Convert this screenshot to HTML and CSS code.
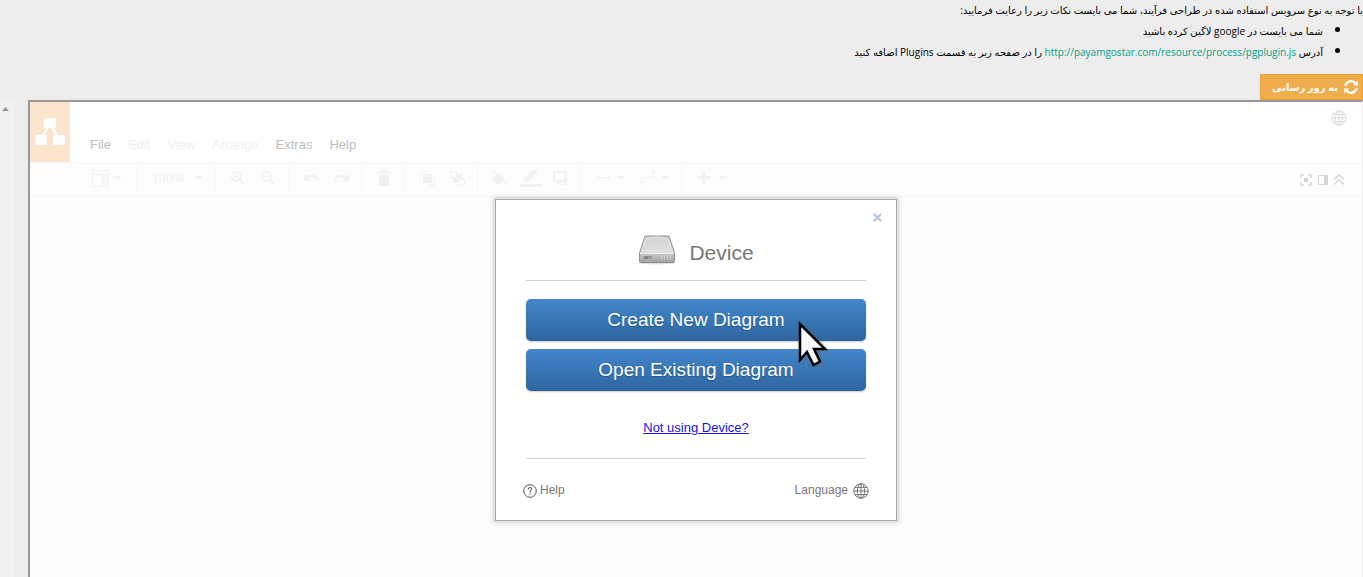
FILE: index.html
```html
<!DOCTYPE html>
<html lang="fa">
<head>
<meta charset="utf-8">
<title>Diagram</title>
<link rel="stylesheet" href="styles.css">
</head>
<body>
<svg class="defs" aria-hidden="true">
  <symbol id="globe" viewBox="0 0 16 16"><g fill="none" stroke="currentColor" stroke-width="1"><circle cx="8" cy="8" r="7.2"/><ellipse cx="8" cy="8" rx="3.6" ry="7.2"/><path d="M8 .8v14.4M.8 8h14.4M2 4.4h12M2 11.6h12"/></g></symbol>
  <symbol id="caret" viewBox="0 0 8 4"><path d="M0 0h8L4 4z" fill="currentColor"/></symbol>
</svg>
<header class="notes" dir="rtl">
  <p class="intro">با توجه به نوع سرویس استفاده شده در طراحی فرآیند، شما می بایست نکات زیر را رعایت فرمایید:</p>
  <ul class="steps">
    <li>شما می بایست در google لاگین کرده باشید</li>
    <li>آدرس <a href="http://payamgostar.com/resource/process/pgplugin.js">http://payamgostar.com/resource/process/pgplugin.js</a> را در صفحه زیر به قسمت Plugins اضافه کنید</li>
  </ul>
  <button class="update" type="button">
    <svg width="14" height="14" viewBox="0 0 14 14"><g fill="none" stroke="#fff" stroke-width="2.2"><path d="M1.3 6A5.7 5.7 0 0 1 11.4 3.4"/><path d="M12.7 8A5.7 5.7 0 0 1 2.6 10.6"/></g><path d="M13.8.6v5H8.8zM.2 13.4v-5h5z" fill="#fff"/></svg>
    <span>به روز رسانی</span>
  </button>
</header>
<main class="workspace">
  <div class="gutter"><svg width="7" height="4" viewBox="0 0 7 4"><path d="M0 4L3.5 0 7 4z" fill="#999"/></svg></div>
  <section class="editor">
    <div class="topbar">
      <div class="logo"><svg width="30" height="28" viewBox="0 0 30 28"><path d="M14 8L6 20M16 8l8 12" stroke="#fff" stroke-width="2"/><g fill="#fff"><rect x="9" y="0" width="12" height="10" rx="2"/><rect x="0" y="17" width="12" height="10" rx="2"/><rect x="18" y="17" width="12" height="10" rx="2"/></g></svg></div>
      <nav class="menu">
        <button type="button">File</button><button type="button" disabled>Edit</button><button type="button" disabled>View</button><button type="button" disabled>Arrange</button><button type="button">Extras</button><button type="button">Help</button>
      </nav>
      <button class="lang-corner" type="button" aria-label="Language"><svg width="16" height="16"><use href="#globe"/></svg></button>
    </div>
    <div class="toolbar">
      <div class="group first">
        <button class="drop" type="button" aria-label="View"><svg width="17" height="17" viewBox="0 0 17 17"><path d="M11 5h5v11h-5z" fill="#f8f8f8"/><path d="M.5.5h16v16H.5zM0 4.5h17M10.5 4v12" fill="none" stroke="currentColor"/></svg><svg width="8" height="4"><use href="#caret"/></svg></button>
      </div>
      <div class="group zoom"><button class="drop percent" type="button">100%<svg width="8" height="4"><use href="#caret"/></svg></button></div>
      <div class="group">
        <button type="button" aria-label="Zoom in"><svg width="14" height="14" viewBox="0 0 14 14"><path d="M9 9l4.3 4.3" stroke="currentColor" stroke-width="2.4"/><path d="M5.5 3v5M3 5.5h5" stroke="currentColor"/><circle cx="5.5" cy="5.5" r="4.6" fill="none" stroke="currentColor" stroke-width="1.8"/></svg></button>
        <button type="button" aria-label="Zoom out"><svg width="14" height="14" viewBox="0 0 14 14"><path d="M9 9l4.3 4.3" stroke="currentColor" stroke-width="2.4"/><path d="M3 5.5h5" stroke="currentColor"/><circle cx="5.5" cy="5.5" r="4.6" fill="none" stroke="currentColor" stroke-width="1.8"/></svg></button>
      </div>
      <div class="group">
        <button type="button" aria-label="Undo"><svg width="15" height="8" viewBox="0 0 15 8"><path d="M0 0v7h7L4.500 4.500C8 2 12 3 14 7h1C14 0 7-1 2.500 2.500z" fill="currentColor"/></svg></button>
        <button type="button" aria-label="Redo"><svg width="15" height="8" viewBox="0 0 15 8"><path d="M15 0v7H8l2.500-2.500C7 2 3 3 1 7H0C1 0 8-1 12.500 2.500z" fill="currentColor"/></svg></button>
      </div>
      <div class="group">
        <button type="button" aria-label="Delete"><svg width="14" height="16" viewBox="0 0 14 16"><path d="M0 1.500h4V0h6v1.500h4v2H0zM2 5h10v11H2z" fill="currentColor"/></svg></button>
      </div>
      <div class="group">
        <button type="button" aria-label="To front"><svg width="15" height="15" viewBox="0 0 15 15"><path d="M3 3h9v9H3z" fill="currentColor"/><path d="M7 .5H.5V7M14.500 8v6.500H8" fill="none" stroke="currentColor"/></svg></button>
        <button type="button" aria-label="To back"><svg width="15" height="15" viewBox="0 0 15 15"><path d="M7 3h5v5H7zM3 7h5v5H3z" fill="currentColor"/><path d="M.5.500h6v6h-6zM8.500 8.500h6v6h-6z" fill="#fdfdfd" stroke="currentColor"/></svg></button>
      </div>
      <div class="group">
        <button type="button" aria-label="Fill colour"><svg width="17" height="15" viewBox="0 0 17 15"><path d="M7 2l6 6-6.500 6L0 8z" fill="currentColor"/><path d="M1 0l7 7" stroke="currentColor" stroke-width="1.400"/><path d="M14.500 9c4 5 0 5 0 5s-4 0 0-5z" fill="currentColor" opacity=".7"/></svg></button>
        <button type="button" aria-label="Line colour"><svg width="21" height="18" viewBox="0 0 21 18"><path d="M4 13V9.500L13 1q2-2 3.500 0T16 4.500L7.500 13zM0 15h21v3H0z" fill="currentColor"/></svg></button>
        <button type="button" aria-label="Shadow"><svg width="15" height="14" viewBox="0 0 15 14"><path d="M3 11h10V3h2v11H3z" fill="currentColor" opacity=".6"/><path d="M1 1h11v9H1z" fill="none" stroke="currentColor" stroke-width="2"/></svg></button>
      </div>
      <div class="group">
        <button class="drop" type="button" aria-label="Arrow"><svg width="16" height="16" viewBox="0 0 16 16"><path d="M0 7.500h13" stroke="currentColor"/><path d="M12 5l3 2.500-3 2.500z" fill="currentColor"/></svg><svg width="8" height="4"><use href="#caret"/></svg></button>
        <button class="drop" type="button" aria-label="Waypoints"><svg width="16" height="16" viewBox="0 0 16 16"><path d="M.500 12.500h2v2h-2zM12.500.500h2v2h-2zM1.500 12V7.500h12V3" fill="none" stroke="currentColor"/></svg><svg width="8" height="4"><use href="#caret"/></svg></button>
      </div>
      <div class="group last">
        <button class="drop" type="button" aria-label="Insert"><svg width="16" height="14" viewBox="0 0 16 14"><path d="M6.500 0v13M0 6.500h13" stroke="currentColor" stroke-width="3"/></svg><svg width="8" height="4"><use href="#caret"/></svg></button>
      </div>
      <div class="panel-tools">
        <button type="button" aria-label="Fullscreen"><svg width="12" height="12" viewBox="0 0 12 12"><path d="M4 4h4v4H4z" fill="currentColor"/><path d="M1 4V1h3M8 1h3v3M11 8v3H8M4 11H1V8" fill="none" stroke="currentColor" stroke-width="1.500"/></svg></button>
        <button type="button" aria-label="Format panel"><svg width="10" height="10" viewBox="0 0 10 10"><path d="M.500.500h9v9h-9z" fill="none" stroke="currentColor"/><path d="M6 1h3v8H6z" fill="currentColor"/></svg></button>
        <button type="button" aria-label="Collapse"><svg width="10" height="11" viewBox="0 0 10 11"><path d="M0 5.500l5-4.500 5 4.500M0 10.500L5 6l5 4.500" fill="none" stroke="currentColor" stroke-width="1.400"/></svg></button>
      </div>
    </div>
    <div class="canvas"></div>
    <div class="dialog" role="dialog" aria-labelledby="storage">
      <button class="close" type="button" aria-label="Close"><svg width="9" height="9" viewBox="0 0 9 9"><path d="M.700.700l7.600 7.600M8.300.700L.700 8.300" stroke="#b1c6dc" stroke-width="2"/></svg></button>
      <div class="title">
        <svg width="38" height="30" viewBox="0 0 38 30">
          <defs><linearGradient id="top" x1="0" y1="0" x2="0" y2="1"><stop offset="0" stop-color="#d2d2d2"/><stop offset="1" stop-color="#e6e6e6"/></linearGradient><linearGradient id="front" x1="0" y1="0" x2="0" y2="1"><stop offset="0" stop-color="#c9c9c9"/><stop offset="1" stop-color="#a2a2a2"/></linearGradient></defs>
          <ellipse cx="19" cy="28" rx="18" ry="1.500" fill="#ddd"/>
          <path d="M7 1h24l5.500 17v8.500q0 1-1 1h-33q-1 0-1-1V18z" fill="url(#top)" stroke="#919191"/>
          <ellipse cx="19" cy="9.500" rx="13" ry="7.500" fill="none" stroke="#e8e8e8"/>
          <path d="M2 18.500h34v8.500H2z" fill="url(#front)"/>
          <path d="M2 18.500h34" stroke="#eee"/>
          <path d="M6 21h4v3H6z" fill="#858585"/><path d="M10 21h4v3h-4z" fill="#9c9c9c"/>
          <path d="M23.500 20v5M26.500 20v5M29.500 20v5M32.500 20v5" stroke="#cfcfcf"/>
        </svg>
        <h1 id="storage">Device</h1>
      </div>
      <div class="actions">
        <button class="primary" type="button">Create New Diagram</button>
        <button class="primary" type="button">Open Existing Diagram</button>
        <svg class="pointer" width="32" height="50" viewBox="0 0 32 50"><path d="M3 3v36l7-8 6.500 13 6.500-3.500L17 28h11z" fill="#f8f8f8" stroke="#000" stroke-width="2.500"/></svg>
      </div>
      <a class="switch" href="#storage">Not using Device?</a>
      <div class="foot">
        <a href="#help"><svg width="14" height="14" viewBox="0 0 14 14" fill="none" stroke="#555"><circle cx="7" cy="7" r="6.300"/><path d="M5.200 5.500q0-2 1.800-2t1.800 1.700Q8.800 6.200 7 7v1.500M7 9.500v1.300"/></svg>Help</a>
        <a class="language" href="#language">Language<svg width="16" height="16"><use href="#globe"/></svg></a>
      </div>
    </div>
  </section>
</main>
</body>
</html>
```
FILE: styles.css
```css
* { box-sizing: border-box; }
body {
  margin: 0;
  min-height: 100vh;
  display: flex;
  flex-direction: column;
  background: #ededed;
  font-family: "Liberation Sans", Arial, sans-serif;
}
svg { display: block; flex: none; }
.defs { position: absolute; width: 0; height: 0; }
button { margin: 0; padding: 0; border: 0; background: none; font: inherit; color: inherit; }

.notes {
  display: flex;
  flex-direction: column;
  align-items: flex-start;
  color: #000;
  font: 10px/20px "Open Sans", "DejaVu Sans", sans-serif;
}
.intro { margin: 0; }
.steps { margin: 0 0 12px; padding: 0 40px 0 0; }
.steps li::marker { font-size: 14px; }
.steps a { color: #009f8c; text-decoration: none; }
.update {
  display: flex;
  align-items: center;
  justify-content: flex-start;
  gap: 6px;
  width: 103px;
  height: 26px;
  padding: 0 4px;
  border: 1px solid #eea236;
  background: #f0ad4e;
  color: #fff;
  font-weight: bold;
  white-space: nowrap;
}

.workspace { flex: 1; display: flex; }
.gutter { width: 14px; margin-right: 14px; padding: 7px 0 0 2px; background: #f1f1f1; }
.editor {
  position: relative;
  flex: 1;
  display: flex;
  flex-direction: column;
  border: solid #999;
  border-width: 2px 0 0 2px;
  border-right: 1px solid #eee;
}
.topbar { display: flex; height: 60px; background: #fff; }
.logo { width: 40px; padding: 16px 5px 0; background: #fce5cd; }
.menu {
  flex: 1;
  display: flex;
  align-items: flex-end;
  gap: 17px;
  padding: 0 20px 9px;
  color: #bcbcbc;
  font-size: 13px;
  line-height: 16px;
}
.menu button:disabled { color: #efefef; }
.lang-corner { align-self: flex-start; margin: 8px 15px 0 0; color: #dadada; }

.toolbar {
  display: flex;
  height: 35px;
  border: solid #f7f7f7;
  border-width: 1px 0;
  background: #fdfdfd;
  color: #f1f1f1;
}
.group { display: flex; padding: 0 5px 3px 7px; border-right: 1px solid #f7f7f7; }
.group.first { padding-left: 55px; padding-right: 7px; }
.group.last { border: 0; }
.group button { display: flex; align-items: center; justify-content: center; width: 30px; }
.group .drop { gap: 5px; width: 44px; }
.group .percent { gap: 10px; width: 66px; font-size: 13px; }
.panel-tools { display: flex; align-items: center; gap: 6px; margin-left: auto; padding-right: 18px; color: #d5d5d5; }
.canvas { flex: 1; background: #fcfcfc; }

.dialog {
  position: absolute;
  top: 97px;
  left: 50%;
  transform: translateX(-50%);
  width: 402px;
  padding: 30px 30px 21px;
  border: 1px solid #aaa;
  background: #fff;
  box-shadow: 0 0 4px 2px #d5d5d5;
  color: #777;
}
.close { position: absolute; top: 13px; right: 14px; }
.title {
  display: flex;
  align-items: center;
  justify-content: center;
  gap: 13px;
  height: 51px;
  padding-bottom: 11px;
  border-bottom: 1px solid #d3d3d3;
}
h1 { margin: 6px 0 0; font-size: 21px; line-height: 24px; font-weight: normal; }
.actions { position: relative; display: grid; gap: 8px; margin-top: 18px; }
.primary {
  height: 42px;
  border-radius: 5px;
  background: linear-gradient(#4387cd, #2f659e);
  box-shadow: 0 1px 2px #ccc;
  color: #fff;
  font-size: 19px;
  text-shadow: 0 1px 1px #245486;
}
.pointer { position: absolute; top: 22px; left: 271px; filter: drop-shadow(1px 2px 2px #6668); }
.switch { display: block; margin: 29px auto 0; width: max-content; color: #1414ee; font-size: 13px; line-height: 16px; }
.foot {
  display: flex;
  justify-content: space-between;
  margin: 22px -3px 0;
  padding: 24px 0 0;
  background: linear-gradient(#d3d3d3, #d3d3d3) top / calc(100% - 6px) 1px no-repeat;
  font-size: 12px;
  line-height: 17px;
}
.foot a { display: flex; align-items: center; gap: 3px; color: inherit; text-decoration: none; }
.foot .language { gap: 5px; }
```
